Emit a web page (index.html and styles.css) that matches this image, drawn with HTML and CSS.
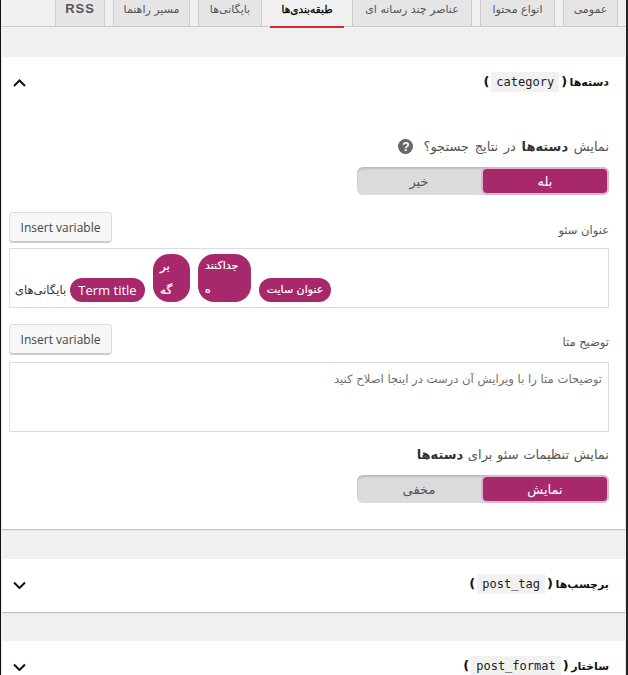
FILE: index.html
```html
<!DOCTYPE html>
<html lang="fa" dir="rtl">
<head>
    <meta charset="UTF-8">
    <title>تنظیمات سئو</title>
    <link rel="stylesheet" href="styles.css">
</head>
<body>
    <div class="tabs">
        <a class="tab">عمومی</a>
        <a class="tab">انواع محتوا</a>
        <a class="tab">عناصر چند رسانه ای</a>
        <a class="tab active">طبقه‌بندی‌ها</a>
        <a class="tab">بایگانی‌ها</a>
        <a class="tab">مسیر راهنما</a>
        <a class="tab rss">RSS</a>
    </div>

    <section class="panel">
        <div class="panel-head">
            <h2><span class="name">دسته‌ها</span> (<code>category</code>)</h2>
            <svg class="chevron" viewBox="0 0 13 8"><path d="M1 7 6.5 1.5 12 7"/></svg>
        </div>
        <div class="panel-body">
            <div class="field-label search-label">
                <span>نمایش <b>دسته‌ها</b> در نتایج جستجو؟</span>
                <span class="help">?</span>
            </div>
            <div class="switch">
                <span class="on">بله</span>
                <span class="off">خیر</span>
            </div>

            <div class="label-row">
                <span class="row-label">عنوان سئو</span>
                <button class="insert">Insert variable</button>
            </div>
            <div class="title-box" dir="ltr">
                <span class="plain">بایگانی‌های</span>
                <span class="pill latin">Term title</span>
                <span class="pill wrap page">بر<br>گه</span>
                <span class="pill wrap sep">جداکننده</span>
                <span class="pill site">عنوان سایت</span>
            </div>

            <div class="label-row">
                <span class="row-label">توضیح متا</span>
                <button class="insert">Insert variable</button>
            </div>
            <div class="meta-box">توضیحات متا را با ویرایش آن درست در اینجا اصلاح کنید</div>

            <div class="field-label show-label">نمایش تنظیمات سئو برای <b>دسته‌ها</b></div>
            <div class="switch">
                <span class="on">نمایش</span>
                <span class="off">مخفی</span>
            </div>
        </div>
    </section>

    <section class="panel">
        <div class="panel-head">
            <h2><span class="name">برچسب‌ها</span> (<code>post_tag</code>)</h2>
            <svg class="chevron" viewBox="0 0 13 8"><path d="M1 1.5 6.5 7 12 1.5"/></svg>
        </div>
    </section>

    <section class="panel">
        <div class="panel-head">
            <h2><span class="name">ساختار</span> (<code>post_format</code>)</h2>
            <svg class="chevron" viewBox="0 0 13 8"><path d="M1 1.5 6.5 7 12 1.5"/></svg>
        </div>
    </section>
</body>
</html>
```

FILE: styles.css
```css
* {
    margin: 0;
    padding: 0;
    box-sizing: border-box;
}

html {
    overflow: hidden;
}

body {
    height: 675px;
    overflow: hidden;
    border-left: 1px solid #111;
    border-right: 2px solid #222;
    background: #f0f0f0;
    color: #444;
    font-family: "DejaVu Sans", sans-serif;
    font-size: 12px;
}

/* tabs */
.tabs {
    display: grid;
    grid-template-columns: 55px 75px 120px 74px 64px 77px 50px;
    grid-template-rows: 26px;
    gap: 8px;
    height: 27px;
    padding-right: 8px;
    border-bottom: 1px solid #ccc;
}

.tab {
    height: 26px;
    padding-top: 3px;
    border: 1px solid #ccc;
    border-top: 0;
    border-bottom: 0;
    background: #e5e5e5;
    color: #555;
    font-size: 11px;
    text-align: center;
    white-space: nowrap;
}

.tab.active {
    height: 28px;
    border: 0;
    border-bottom: 2px solid #d9282f;
    background: #f0f0f0;
    color: #000;
    font-size: 10.5px;
    -webkit-text-stroke: .3px #000;
}

.tab.rss {
    padding-top: 1px;
    font-family: "Liberation Sans", sans-serif;
    font-size: 13px;
    font-weight: bold;
    letter-spacing: 1px;
}

/* panels */
.panel {
    margin: 30px 1px 0;
    background: #fff;
    box-shadow: 0 1px 1px rgba(0, 0, 0, .2);
}

.panel:last-child {
    margin-top: 29px;
}

.panel-head {
    display: flex;
    align-items: center;
    justify-content: space-between;
    height: 53px;
    padding: 0 16px 0 11px;
}

h2 {
    padding-bottom: 3px;
    color: #111;
    font-size: 13px;
    font-weight: bold;
    word-spacing: -2px;
}

h2 .name {
    font-size: 11px;
}

code {
    display: inline-block;
    margin: 0 2px;
    padding: 0 5px;
    background: #f1f1f1;
    color: #222;
    font-family: "DejaVu Sans Mono", monospace;
    font-size: 12px;
    font-weight: normal;
    line-height: 20px;
    direction: ltr;
    vertical-align: middle;
}

.chevron {
    width: 13px;
    height: 8px;
    margin-bottom: 2px;
    fill: none;
    stroke: #111;
    stroke-width: 2;
}

.panel-body {
    padding: 29px 16px 26px 7px;
}

.field-label {
    color: #555;
    font-size: 13px;
}

.field-label b {
    color: #333;
}

.search-label {
    display: flex;
    align-items: center;
    gap: 10px;
    word-spacing: 1.5px;
}

.help {
    display: flex;
    align-items: center;
    justify-content: center;
    width: 15px;
    height: 15px;
    border-radius: 50%;
    background: #666;
    color: #fff;
    font-family: "Liberation Sans", sans-serif;
    font-size: 12px;
    font-weight: bold;
}

.switch {
    display: flex;
    width: 252px;
    height: 28px;
    margin-top: 13px;
    border-radius: 6px;
    background: #dbdbdb;
    box-shadow: inset 0 2px 2px rgba(0, 0, 0, .15);
}

.switch span {
    display: flex;
    flex: 1;
    align-items: center;
    justify-content: center;
    font-size: 13px;
}

.switch .on {
    border: 2px solid #dbb8c9;
    border-radius: 6px;
    background: #a7286b;
    color: #fff;
}

.switch .off {
    color: #555;
}

/* fields */
.label-row {
    display: flex;
    align-items: center;
    justify-content: space-between;
    margin-top: 17px;
}

.label-row + .title-box {
    margin-top: 5px;
}

.title-box + .label-row {
    margin-top: 16px;
}

.row-label {
    margin-top: 5px;
    color: #555;
    font-size: 11.5px;
}

.insert {
    width: 103px;
    height: 31px;
    border: 1px solid #ddd;
    border-bottom: 2px solid #ccc;
    border-radius: 4px;
    background: #f7f7f7;
    color: #444;
    font-family: "Open Sans", sans-serif;
    font-size: 12px;
}

.title-box {
    display: flex;
    align-items: flex-end;
    gap: 8px;
    height: 60px;
    padding: 5px;
    border: 1px solid #ddd;
    background: #fff;
}

.plain {
    width: 50px;
    margin-right: -3px;
    color: #333;
    font-size: 11.5px;
    line-height: 24px;
    white-space: nowrap;
}

.pill {
    padding: 0 7px;
    border-radius: 13px;
    background: #a7286b;
    color: #fff;
    font-size: 11px;
    line-height: 24px;
    white-space: nowrap;
    -webkit-text-stroke: .2px #fff;
}

.pill.wrap {
    height: 48px;
    border-radius: 16px;
    white-space: normal;
    word-break: break-all;
}

.pill.page {
    width: 37px;
    font-size: 12px;
}

.pill.sep {
    width: 53px;
}

.pill.site {
    width: 72px;
    text-align: center;
}

.pill.latin {
    width: 75px;
    font-family: "Open Sans", sans-serif;
    font-size: 13px;
    text-align: center;
    -webkit-text-stroke: 0;
}

.meta-box {
    height: 70px;
    margin-top: 7px;
    padding: 9px 6px;
    border: 1px solid #ddd;
    color: #6f6f6f;
    font-size: 11.6px;
}

.show-label {
    margin-top: 15px;
    word-spacing: .5px;
}
```
